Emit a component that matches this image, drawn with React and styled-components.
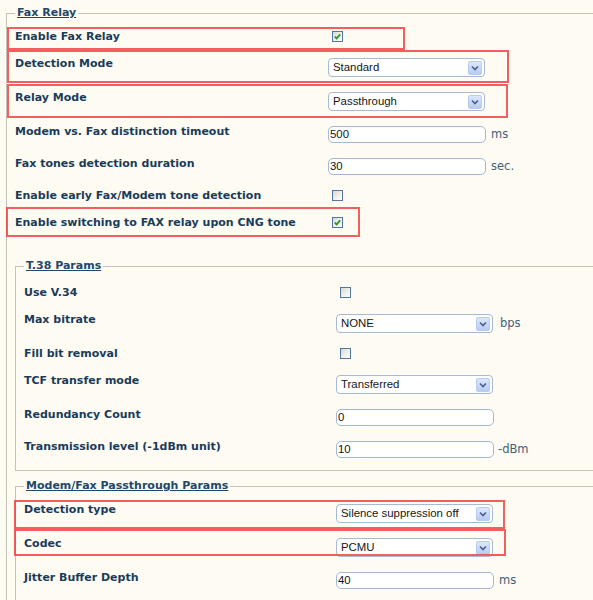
import React from "react";
import styled, { createGlobalStyle } from "styled-components";

const Global = createGlobalStyle`
  html, body { margin: 0; padding: 0; background: #fdfbf2; overflow: hidden; }
  body { font-family: "DejaVu Sans", Verdana, sans-serif; }
`;

const Page = styled.div`
  padding: 6px 0 0 6px;
`;

const Group = styled.fieldset`
  --label-w: ${(p) => p.$labelWidth}px;
  margin: ${(p) => p.$mt || 0}px 0 0 0;
  padding: ${(p) => p.$pt}px 0 ${(p) => p.$pb}px 8px;
  border: 1px solid #c4c2b4;
  border-right: none;
  min-width: 0;
`;

const Legend = styled.legend`
  padding: 0 2px;
  font: bold 11px/14px "DejaVu Sans", Verdana, sans-serif;
  color: #22476b;
  text-decoration: underline;
`;

const Row = styled.div`
  position: relative;
  display: grid;
  grid-template-columns: var(--label-w) auto;
  align-items: start;
  padding: 5px 0 10px;
`;

const Label = styled.div`
  margin-top: -1px;
  font: bold 11px/13px "DejaVu Sans", Verdana, sans-serif;
  color: #1b3b5a;
  white-space: nowrap;
`;

const Control = styled.div`
  display: flex;
  align-items: center;
  gap: ${(p) => p.$gap ?? 5}px;
`;

const Highlight = styled.div`
  position: absolute;
  box-sizing: border-box;
  left: ${(p) => p.$left}px;
  top: ${(p) => p.$top}px;
  width: ${(p) => p.$w}px;
  height: ${(p) => p.$h}px;
  border: 2px solid rgba(240, 56, 56, 0.8);
  pointer-events: none;
`;

const Box = styled.span`
  display: inline-flex;
  align-items: center;
  justify-content: center;
  box-sizing: border-box;
  width: 11px;
  height: 11px;
  margin: 0 0 1px 4px;
  border: 1px solid #54779c;
  background: linear-gradient(135deg, #d9d9d3 0%, #f0f0ec 55%, #ffffff 100%);
`;

const SelectBox = styled.div`
  box-sizing: border-box;
  width: 157px;
  height: 19px;
  display: flex;
  align-items: center;
  justify-content: space-between;
  padding: 0 2px 0 4px;
  border: 1px solid #a6bad2;
  border-radius: 4px;
  background: #fff;
  font: 11.4px/1 "Liberation Sans", Arial, sans-serif;
  color: #151515;
`;

const Arrow = styled.span`
  box-sizing: border-box;
  width: 14px;
  height: 14px;
  display: flex;
  align-items: center;
  justify-content: center;
  border: 1px solid #b9ccef;
  border-radius: 2px;
  background: linear-gradient(180deg, #dce7fd 0%, #b6cbf5 100%);
`;

const TextBox = styled.div`
  box-sizing: border-box;
  width: 158px;
  height: 17px;
  display: flex;
  align-items: center;
  padding: 0 1px;
  border: 1px solid #a3b8d0;
  border-radius: 5px;
  background: #fff;
  font: 11.4px/1 "Liberation Sans", Arial, sans-serif;
  color: #151515;
`;

const Unit = styled.span`
  font: 11.5px/1 "DejaVu Sans", Verdana, sans-serif;
  color: #3f6079;
`;

function Check({ checked }) {
  return (
    <Box>
      {checked && (
        <svg width="9" height="9" viewBox="0 0 9 9">
          <path d="M1.8 4.6 L3.6 6.4 L7.2 2.4" fill="none" stroke="#1f9c22" strokeWidth="1.7" />
        </svg>
      )}
    </Box>
  );
}

function Select({ value }) {
  return (
    <SelectBox>
      <span>{value}</span>
      <Arrow>
        <svg width="8" height="6" viewBox="0 0 8 6">
          <path d="M1 1.5 L4 4.5 L7 1.5" fill="none" stroke="#4a5f86" strokeWidth="1.6" />
        </svg>
      </Arrow>
    </SelectBox>
  );
}

function Field({ label, children, mark, gap }) {
  return (
    <Row>
      {mark && <Highlight $left={mark[0]} $top={mark[1]} $w={mark[2]} $h={mark[3]} />}
      <Label>{label}</Label>
      <Control $gap={gap}>{children}</Control>
    </Row>
  );
}

export default function App() {
  return (
    <Page>
      <Global />
      <Group $labelWidth={313} $pt={6} $pb={20}>
        <Legend>Fax Relay</Legend>
        <Field label="Enable Fax Relay" mark={[-8, 1, 398, 23]}>
          <Check checked />
        </Field>
        <Field label="Detection Mode" mark={[-8, -3, 502, 33]}>
          <Select value="Standard" />
        </Field>
        <Field label="Relay Mode" mark={[-8, -3, 501, 34]}>
          <Select value="Passthrough" />
        </Field>
        <Field label="Modem vs. Fax distinction timeout">
          <TextBox>500</TextBox>
          <Unit>ms</Unit>
        </Field>
        <Field label="Fax tones detection duration">
          <TextBox>30</TextBox>
          <Unit>sec.</Unit>
        </Field>
        <Field label="Enable early Fax/Modem tone detection">
          <Check />
        </Field>
        <Field label="Enable switching to FAX relay upon CNG tone" mark={[-9, -5, 354, 30]}>
          <Check checked />
        </Field>

        <Group $labelWidth={312} $pt={9} $pb={2} $mt={20}>
          <Legend>T.38 Params</Legend>
          <Field label="Use V.34">
            <Check />
          </Field>
          <Field label="Max bitrate" gap={7}>
            <Select value="NONE" />
            <Unit>bps</Unit>
          </Field>
          <Field label="Fill bit removal">
            <Check />
          </Field>
          <Field label="TCF transfer mode">
            <Select value="Transferred" />
          </Field>
          <Field label="Redundancy Count">
            <TextBox>0</TextBox>
          </Field>
          <Field label="Transmission level (-1dBm unit)" gap={4}>
            <TextBox>10</TextBox>
            <Unit>-dBm</Unit>
          </Field>
        </Group>

        <Group $labelWidth={312} $pt={6} $pb={20} $mt={8}>
          <Legend>Modem/Fax Passthrough Params</Legend>
          <Field label="Detection type" mark={[-10, 1, 491, 29]}>
            <Select value="Silence suppression off" />
          </Field>
          <Field label="Codec" mark={[-10, -4, 492, 27]}>
            <Select value="PCMU" />
          </Field>
          <Field label="Jitter Buffer Depth">
            <TextBox>40</TextBox>
            <Unit>ms</Unit>
          </Field>
        </Group>
      </Group>
    </Page>
  );
}
